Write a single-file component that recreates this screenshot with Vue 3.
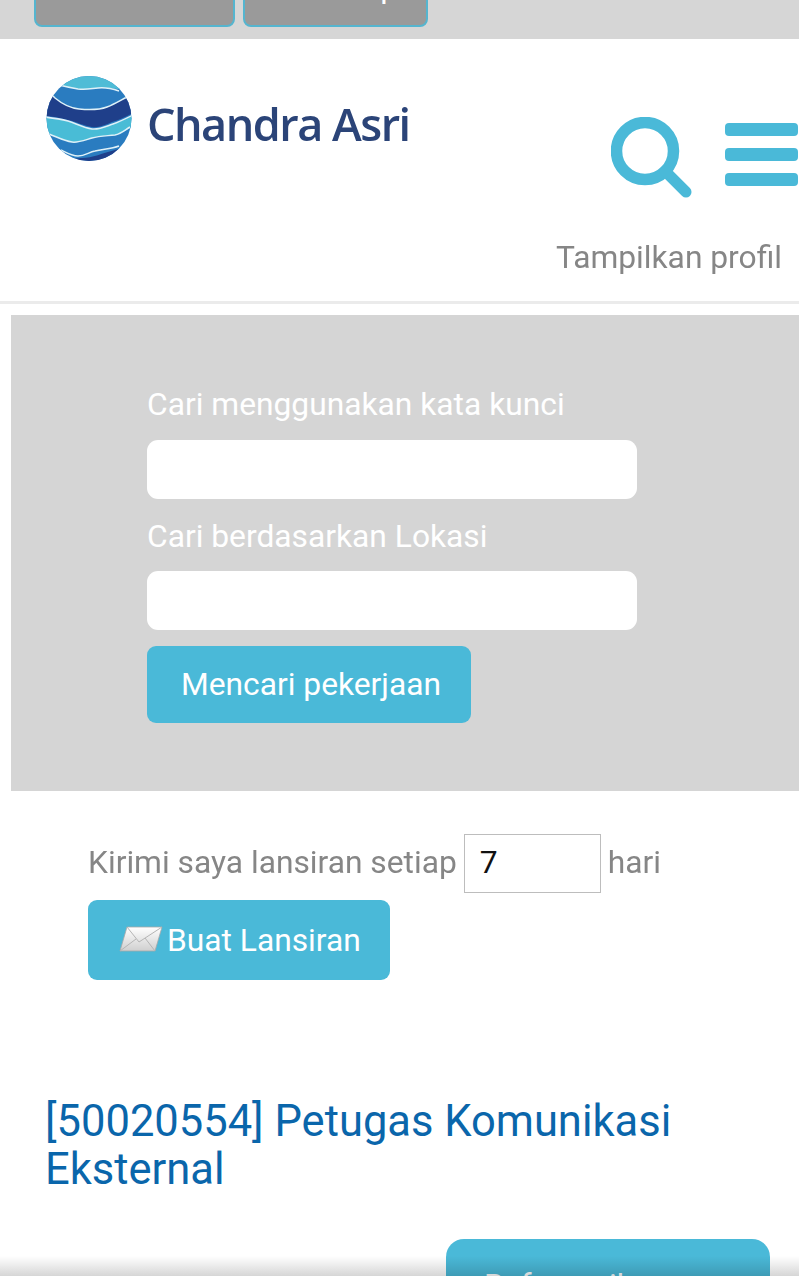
<template>
  <div class="page">
    <div class="topbar">
      <button class="tb tb-a"></button>
      <button class="tb tb-b">Tutup</button>
    </div>
    <header class="head">
      <div class="head-row">
        <div class="logo">
          <svg class="globe" width="88" height="88" viewBox="0 0 88 88">
            <defs><clipPath id="gc"><circle cx="44" cy="43.5" r="42.5" /></clipPath></defs>
            <g clip-path="url(#gc)">
              <rect width="88" height="88" fill="#2a7cc0" />
              <path d="M0 0H88V16C80 15 62 12 53 13C44 14 40 15 33 14C27 13 22 12 14 10L0 8Z" fill="#4fbcd6" />
              <path d="M0 17C4 18 7 20 10 23C16 28 24 33 34 34C44 35 54 35 62 32C70 29 76 25 82 23L88 24V38C80 42 74 45 67 47C60 50 54 53 47 52C39 51 32 47 23 45C14 43 6 41 0 41Z" fill="#1f3f8a" />
              <path d="M0 42C8 43 15 44 23 46C32 49 39 53 47 54C54 55 62 51 68 49C74 47 80 44 88 40V52C80 55 76 59 70 60C60 61 54 61 47 63C40 65 33 68 27 67C19 66 12 62 0 58Z" fill="#49bcd6" />
              <path d="M20 88C26 84 31 83 37 83C47 83 58 78 70 75L88 70V88Z" fill="#1f3f8a" />
              <g fill="none" stroke="#dff1f8" stroke-width="1.5">
                <path d="M14 10C22 12 27 13 33 14C40 15 44 14 53 13C62 12 68 14 74 16" />
                <path d="M6 20C7 20 8 21 10 23C16 28 24 33 34 34C44 35 54 35 62 32C70 29 76 25 82 22" />
                <path d="M0 42C8 43 15 44 23 46C32 49 39 53 47 54C54 55 62 51 68 49C74 47 80 44 88 40" />
                <path d="M4 59C12 62 19 66 27 67C33 68 40 65 47 63C54 61 60 61 70 60C76 59 80 55 85 52" />
                <path d="M16 75C22 78 27 81 33 81C40 81 44 77 50 76C58 74 66 74 74 71" />
              </g>
            </g>
          </svg>
          <span class="brand">Chandra Asri</span>
        </div>
        <div class="tools">
          <svg class="search" width="82" height="82" viewBox="0 0 82 82">
            <circle cx="34" cy="34" r="28.5" fill="none" stroke="#4ab9d8" stroke-width="11.5" />
            <path d="M54 54L75 75" stroke="#4ab9d8" stroke-width="11" stroke-linecap="round" />
          </svg>
          <div class="burger"><i></i><i></i><i></i></div>
        </div>
      </div>
      <div class="profile">Tampilkan profil</div>
    </header>

    <section class="panel">
      <label class="lbl">Cari menggunakan kata kunci</label>
      <input class="field" type="text" />
      <label class="lbl lbl2">Cari berdasarkan Lokasi</label>
      <input class="field" type="text" />
      <button class="btn search-btn">Mencari pekerjaan</button>
    </section>

    <section class="alert">
      <div class="alert-row">
        <span class="alert-text">Kirimi saya lansiran setiap</span>
        <input class="days" type="text" value="7" />
        <span class="alert-text">hari</span>
      </div>
      <button class="btn alert-btn">
        <svg class="mail" width="44" height="28" viewBox="0 0 44 28">
          <defs>
            <linearGradient id="env" x1="0" y1="0" x2="0" y2="1">
              <stop offset="0" stop-color="#ffffff" />
              <stop offset="1" stop-color="#cfcfcf" />
            </linearGradient>
          </defs>
          <path d="M8 2H43L36 26H1Z" fill="url(#env)" stroke="#a8a8a8" stroke-width="0.8" />
          <path d="M8 2L20 17L43 2M1 26L17 14M36 26L26 13" fill="none" stroke="#b5b5b5" stroke-width="1" />
        </svg>
        <span>Buat Lansiran</span>
      </button>
    </section>

    <h2 class="job">[50020554] Petugas Komunikasi Eksternal</h2>

    <div class="apply-wrap">
      <button class="btn apply">Referensikan</button>
    </div>
    <div class="fade"></div>
  </div>
</template>

<script setup>
</script>

<style>
html, body { margin: 0; background: #fff; }
</style>

<style scoped>
.page {
  position: relative;
  width: 799px;
  height: 1276px;
  overflow: hidden;
  background: #fff;
  font-family: Roboto, "Liberation Sans", sans-serif;
}
.topbar {
  height: 39px;
  background: #d6d6d6;
  display: flex;
  gap: 8px;
  padding-left: 34px;
  overflow: hidden;
  box-sizing: border-box;
}
.tb {
  height: 68px;
  margin-top: -41px;
  background: #9a9a9a;
  border: 2px solid #55b5cf;
  border-radius: 8px;
  box-sizing: border-box;
  color: #fff;
  font: 32px Roboto, sans-serif;
  padding: 0 0 12px 44px;
}
.tb-a { width: 201px; }
.tb-b { width: 185px; }
.head {
  height: 262px;
  border-bottom: 3px solid #ebebeb;
  display: flex;
  flex-direction: column;
}
.head-row {
  display: flex;
  justify-content: space-between;
  height: 198px;
}
.logo {
  display: flex;
  align-items: center;
  gap: 14px;
  margin: 36px 0 0 45px;
  height: 88px;
}
.globe { filter: blur(0.5px); flex: none; }
.brand {
  font-family: "Open Sans", sans-serif;
  font-size: 45px;
  font-weight: 600;
  color: #2b4478;
  letter-spacing: -1.5px;
  padding-top: 8px;
  filter: blur(0.5px);
}
.tools {
  display: flex;
  gap: 32px;
  padding-top: 78px;
  padding-right: 1px;
  align-items: flex-start;
}
.search { display: block; }
.burger {
  width: 73px;
  display: flex;
  flex-direction: column;
  gap: 12px;
  margin-top: 6px;
}
.burger i {
  display: block;
  height: 13px;
  background: #4ab9d8;
  border-radius: 4px;
}
.profile {
  font-size: 31.75px;
  line-height: 40px;
  color: #858585;
  text-align: right;
  padding: 1px 17px 0 0;
  opacity: 0.99;
}
.panel {
  margin: 11px 0 0 11px;
  height: 476px;
  background: #d5d5d5;
  box-sizing: border-box;
  padding: 68px 0 0 136px;
  display: flex;
  flex-direction: column;
  align-items: flex-start;
}
.lbl {
  color: #fff;
  font-size: 31.75px;
  line-height: 44px;
  margin-bottom: 13px;
  white-space: nowrap;
}
.lbl2 { margin-top: 16px; margin-bottom: 12px; }
.field {
  width: 490px;
  height: 59px;
  background: #fff;
  border: 0;
  border-radius: 11px;
  box-sizing: border-box;
  display: block;
}
.btn {
  background: #4ab9d8;
  color: #fff;
  border: 0;
  border-radius: 9px;
  font-family: Roboto, sans-serif;
  font-size: 31.75px;
  padding: 0;
}
.search-btn {
  width: 324px;
  height: 77px;
  margin-top: 16px;
  padding: 0 0 0 4px;
}
.alert {
  padding: 43px 0 0 88px;
}
.alert-row {
  display: flex;
  align-items: center;
  gap: 7px;
  font-size: 31.75px;
  color: #858585;
  height: 59px;
}
.alert-text { padding-bottom: 2px; opacity: 0.99; }
.days {
  width: 137px;
  height: 59px;
  border: 1px solid #bdbdbd;
  box-sizing: border-box;
  font: 31.75px Roboto, sans-serif;
  color: #111;
  padding: 0 0 2px 15px;
  background: #fff;
}
.alert-btn {
  margin-top: 7px;
  width: 302px;
  height: 80px;
  display: flex;
  align-items: center;
  justify-content: flex-start;
  padding-left: 31px;
  gap: 4px;
  box-sizing: border-box;
}
.mail { display: block; margin-top: -3px; }
.job {
  margin: 118px 30px 0 45px;
  font-size: 43.5px;
  line-height: 48px;
  font-weight: 400;
  color: #0a66ab;
}
.apply-wrap {
  margin-top: 45px;
  padding-left: 446px;
}
.apply {
  width: 324px;
  height: 77px;
  border-radius: 18px;
  text-align: left;
  padding: 16px 0 0 38px;
}
.fade {
  position: absolute;
  left: 0;
  right: 0;
  bottom: 0;
  height: 20px;
  background: linear-gradient(to bottom, rgba(0,0,0,0), rgba(0,0,0,0.16));
  pointer-events: none;
}
</style>
